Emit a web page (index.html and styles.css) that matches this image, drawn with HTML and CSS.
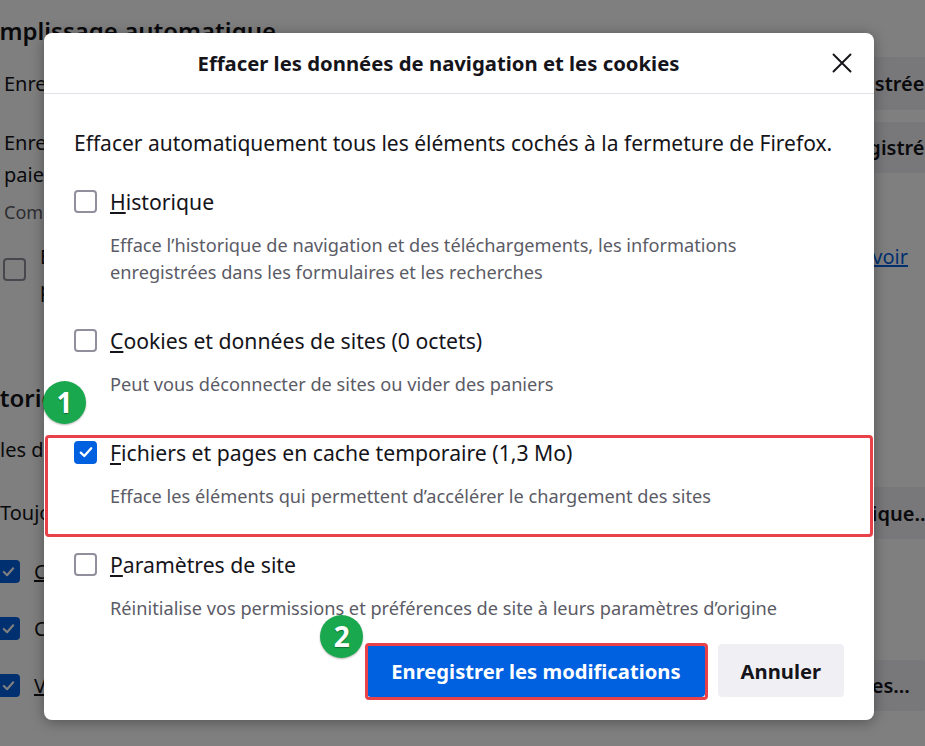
FILE: index.html
```html
<!DOCTYPE html>
<html lang="fr">
<head>
<meta charset="utf-8">
<title>Effacer les données de navigation et les cookies</title>
<link rel="stylesheet" href="styles.css">
</head>
<body>
<div class="page">
  <h2 class="pg-title pg-title-first">Remplissage automatique</h2>
  <div class="pg-row pg-row-a">
    <span class="pg-text pg-indent">Enregistrer et remplir les adresses</span>
    <span class="pg-btn">Adresses enregistrées…</span>
  </div>
  <div class="pg-row pg-row-b">
    <span class="pg-text pg-indent pg-pad">Enregistrer et remplir les informations de<br>paiement</span>
    <span class="pg-btn">Moyens de paiement enregistrés…</span>
  </div>
  <p class="pg-note">Comprend les cartes bancaires et de débit</p>
  <div class="pg-check-row">
    <span class="pg-box pg-box-top"></span>
    <span class="pg-text pg-two">Exiger une authentification de l’appareil pour remplir et modifier les<br>paiements</span>
    <a class="pg-link" href="#">En savoir<br>plus</a>
  </div>
  <h2 class="pg-title pg-title-hist">Historique</h2>
  <p class="pg-line">les données de navigation sont conservées</p>
  <div class="pg-row pg-row-c">
    <span class="pg-text pg-flush">Toujours utiliser le mode de navigation privée</span>
    <span class="pg-btn pg-btn-c">Effacer l’historique…</span>
  </div>
  <div class="pg-cb-row">
    <span class="pg-box pg-box-on"><svg width="15" height="15" viewBox="0 0 16 16"><path d="M3 8.5 6.5 12 13 4.5" fill="none" stroke="#fff" stroke-width="2.2" stroke-linecap="round" stroke-linejoin="round"/></svg></span>
    <span class="pg-text"><u>C</u>onserver l’historique de navigation et des téléchargements</span>
  </div>
  <div class="pg-cb-row">
    <span class="pg-box pg-box-on"><svg width="15" height="15" viewBox="0 0 16 16"><path d="M3 8.5 6.5 12 13 4.5" fill="none" stroke="#fff" stroke-width="2.2" stroke-linecap="round" stroke-linejoin="round"/></svg></span>
    <span class="pg-text">Conserver l’historique des recherches et des formulaires</span>
  </div>
  <div class="pg-cb-row">
    <span class="pg-box pg-box-on"><svg width="15" height="15" viewBox="0 0 16 16"><path d="M3 8.5 6.5 12 13 4.5" fill="none" stroke="#fff" stroke-width="2.2" stroke-linecap="round" stroke-linejoin="round"/></svg></span>
    <span class="pg-text"><u>V</u>ider l’historique lors de la fermeture de Firefox</span>
    <span class="pg-btn pg-btn-d">Paramètres…</span>
  </div>
</div>

<div class="scrim"></div>

<div class="dialog" role="dialog">
  <div class="dlg-head">
    <h1 class="dlg-title">Effacer les données de navigation et les cookies</h1>
    <button class="dlg-close" aria-label="Fermer">
      <svg width="20" height="20" viewBox="0 0 20 20"><path d="M1.5 1.5 18.5 18.5M18.5 1.5 1.5 18.5" stroke="#15141a" stroke-width="1.9" stroke-linecap="round"/></svg>
    </button>
  </div>
  <div class="dlg-body">
    <p class="intro">Effacer automatiquement tous les éléments cochés à la fermeture de Firefox.</p>
    <div class="items">
      <div class="item">
        <div class="item-row"><span class="cb"></span><span class="label"><u>H</u>istorique</span></div>
        <p class="desc">Efface l’historique de navigation et des téléchargements, les informations<br>enregistrées dans les formulaires et les recherches</p>
      </div>
      <div class="item">
        <div class="item-row"><span class="cb"></span><span class="label"><u>C</u>ookies et données de sites (0 octets)</span></div>
        <p class="desc">Peut vous déconnecter de sites ou vider des paniers</p>
      </div>
      <div class="item">
        <div class="item-row"><span class="cb cb-on"><svg width="16" height="16" viewBox="0 0 16 16"><path d="M2.8 8.6 6.3 12 13.2 4.3" fill="none" stroke="#fff" stroke-width="2.3" stroke-linecap="round" stroke-linejoin="round"/></svg></span><span class="label"><u>F</u>ichiers et pages en cache temporaire (1,3 Mo)</span></div>
        <p class="desc">Efface les éléments qui permettent d’accélérer le chargement des sites</p>
        <span class="mark mark-item"></span>
        <span class="badge badge-1">1</span>
      </div>
      <div class="item">
        <div class="item-row"><span class="cb"></span><span class="label"><u>P</u>aramètres de site</span></div>
        <p class="desc">Réinitialise vos permissions et préférences de site à leurs paramètres d’origine</p>
      </div>
    </div>
    <div class="actions">
      <div class="save-wrap">
        <button class="btn btn-primary">Enregistrer les modifications</button>
        <span class="mark mark-btn"></span>
        <span class="badge badge-2">2</span>
      </div>
      <button class="btn btn-secondary">Annuler</button>
    </div>
  </div>
</div>
</body>
</html>
```

FILE: styles.css
```css
* { box-sizing: border-box; }

html, body {
  margin: 0;
  padding: 0;
}

body {
  width: 925px;
  height: 746px;
  overflow: hidden;
  position: relative;
  background: #ffffff;
  color: #15141a;
  font-family: "Noto Sans", "DejaVu Sans", sans-serif;
}

/* ---------- background preferences page ---------- */
.page {
  width: 970px;
  margin-left: -3px;
  display: flex;
  flex-direction: column;
  font-size: 20px;
}

.pg-title {
  margin: 0 0 0 -27px;
  font-size: 24px;
  line-height: 32px;
  font-weight: 600;
}

.pg-title-first { margin-top: 15px; }
.pg-title-hist { margin-top: 76px; margin-left: -34px; }

.pg-row {
  display: flex;
  justify-content: space-between;
  align-items: center;
}

.pg-row-a { margin-top: 10px; height: 53px; }
.pg-row-b { margin-top: 12px; align-items: flex-start; }
.pg-row-c { margin-top: 23px; height: 52px; }

.pg-text {
  flex: 1;
  min-width: 0;
  white-space: nowrap;
  overflow: hidden;
  line-height: 32px;
}

.pg-indent { margin-left: 7px; }
.pg-pad { padding-top: 5px; }
.pg-flush { margin-left: 3px; }

.pg-btn {
  flex-shrink: 0;
  display: flex;
  align-items: center;
  height: 100%;
  padding: 0 16px;
  background: #f0f0f4;
  border-radius: 4px;
  font-weight: 600;
  white-space: nowrap;
}

.pg-row-b .pg-btn { height: 51px; }
.pg-btn-c { margin-right: 20px; }
.pg-btn-d { height: 51px; margin-right: 41px; }

.pg-note {
  margin: 9px 0 0 7px;
  font-size: 18px;
  line-height: 24px;
  color: #5b5b66;
}

.pg-check-row {
  margin-top: 16px;
  display: flex;
  align-items: flex-start;
}

.pg-box {
  width: 23px;
  height: 23px;
  flex-shrink: 0;
  border: 2px solid #8f8f9d;
  border-radius: 4px;
  display: flex;
  align-items: center;
  justify-content: center;
}

.pg-box-top { margin: 18px 14px 0 6px; }

.pg-two { line-height: 33px; }

.pg-link {
  flex-shrink: 0;
  margin-right: 59px;
  line-height: 33px;
  color: #0061e0;
  text-decoration: underline;
}

.pg-line {
  margin: 22px 0 0 3px;
  line-height: 28px;
}

.pg-cb-row {
  height: 57px;
  display: flex;
  align-items: center;
}

.pg-box-on {
  background: #0061e0;
  border-color: #0061e0;
}

.pg-cb-row .pg-box { margin-right: 14px; }

.pg-row-c + .pg-cb-row { margin-top: 4px; }

/* ---------- scrim ---------- */
.scrim {
  position: absolute;
  inset: 0;
  background: rgba(0, 0, 0, 0.5);
}

/* ---------- dialog ---------- */
.dialog {
  position: absolute;
  left: 44px;
  top: 33px;
  width: 830px;
  background: #ffffff;
  border-radius: 8px;
  box-shadow: 0 2px 14px rgba(0, 0, 0, 0.35);
}

.dlg-head {
  height: 61px;
  display: flex;
  align-items: center;
  border-bottom: 1px solid #e0e0e6;
}

.dlg-title {
  flex: 1;
  margin: 0;
  padding-left: 9px;
  text-align: center;
  font-size: 20.3px;
  font-weight: 700;
  line-height: 28px;
}

.dlg-close {
  width: 36px;
  height: 36px;
  margin-right: 14px;
  padding: 0;
  border: 0;
  background: none;
  display: flex;
  align-items: center;
  justify-content: center;
}

.dlg-body {
  padding: 35px 30px 23px;
}

.intro {
  margin: 0;
  font-size: 21px;
  line-height: 28px;
}

.items {
  margin-top: 29px;
  display: flex;
  flex-direction: column;
  gap: 39px;
}

.item { position: relative; }

.item-row {
  height: 30px;
  display: flex;
  align-items: center;
  gap: 13px;
  font-size: 21.2px;
}

.cb {
  width: 23px;
  height: 23px;
  flex-shrink: 0;
  border: 2px solid #8f8f9d;
  border-radius: 4px;
}

.cb-on {
  background: #0061e0;
  border-color: #0061e0;
  display: flex;
  align-items: center;
  justify-content: center;
}

.desc {
  margin: 16px 0 0 36px;
  font-size: 18.2px;
  line-height: 27px;
  color: #5b5b66;
}

.actions {
  margin-top: 22px;
  display: flex;
  justify-content: flex-end;
  gap: 13px;
}

.save-wrap { position: relative; }

.btn {
  height: 53px;
  border: 0;
  border-radius: 4px;
  font-family: inherit;
  font-size: 20.2px;
  font-weight: 700;
  padding: 0 24px;
}

.btn-primary {
  background: #0061e0;
  color: #ffffff;
}

.btn-secondary {
  background: #f0f0f4;
  color: #15141a;
  padding: 0 23px;
}

/* ---------- annotations ---------- */
.mark {
  position: absolute;
  border: 3px solid #e8414a;
  border-radius: 4px;
  pointer-events: none;
}

.mark-item {
  top: -2px;
  left: -29px;
  right: -29px;
  bottom: -27px;
}

.mark-btn {
  top: -1px;
  left: -2px;
  right: -3px;
  bottom: -3px;
}

.badge {
  position: absolute;
  width: 43px;
  height: 43px;
  border-radius: 50%;
  background: #19a84d;
  color: #ffffff;
  font-size: 28px;
  font-weight: 700;
  line-height: 43px;
  text-align: center;
  text-shadow: 0 1px 1px rgba(0, 0, 0, 0.35);
  box-shadow: 0 1px 2px rgba(0, 0, 0, 0.3);
}

.badge-1 { left: -31px; top: -56px; }
.badge-2 { left: -47px; top: -29px; }
```
